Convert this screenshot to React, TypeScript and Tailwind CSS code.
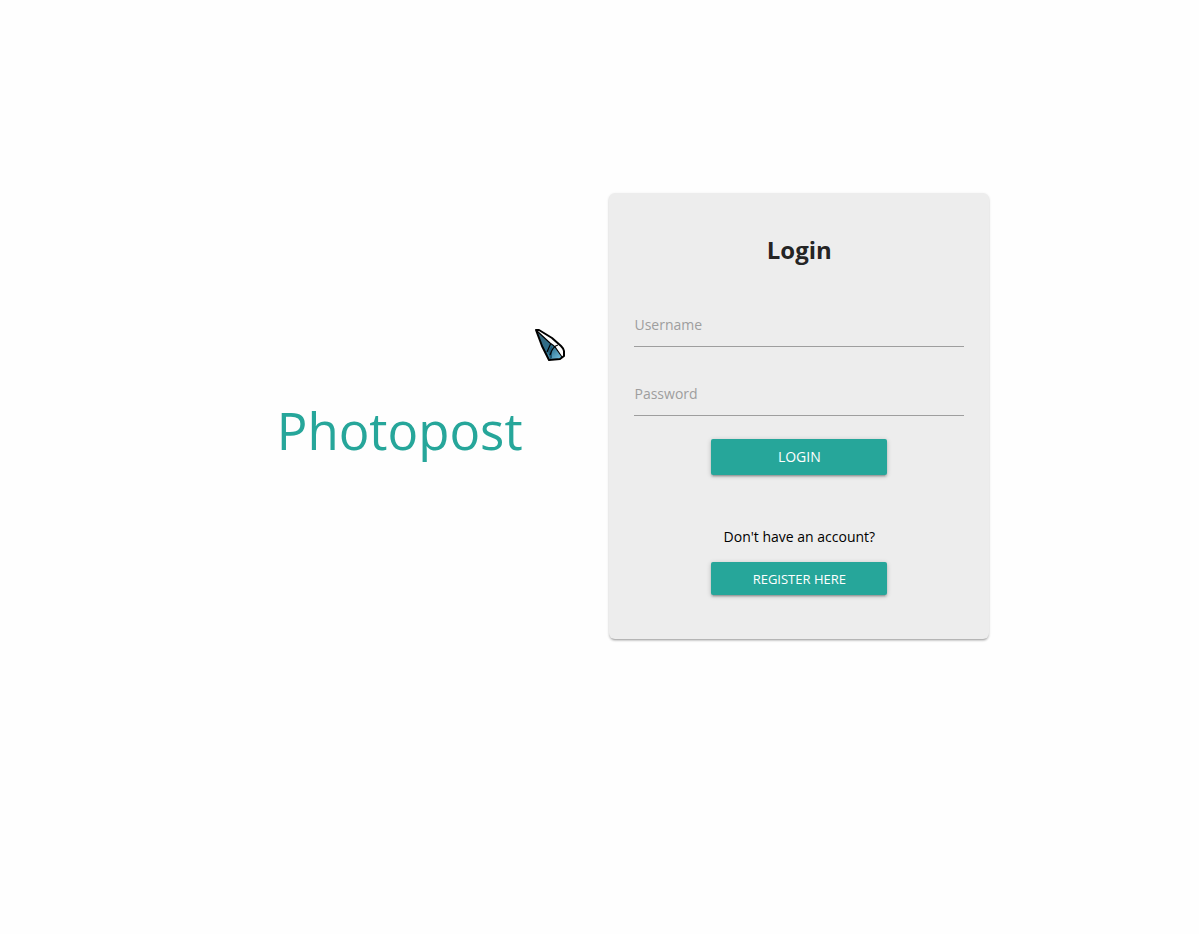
function Pointer() {
  return (
    <svg className="pointer-events-none absolute top-[328px] left-[534px] h-[34px] w-8" viewBox="0 0 32 34" aria-hidden="true">
      <defs>
        <linearGradient id="blade" gradientUnits="userSpaceOnUse" x1="6" y1="10" x2="23" y2="31">
          <stop offset="0" stopColor="#35697f" />
          <stop offset="0.55" stopColor="#2c6e8c" />
          <stop offset="1" stopColor="#6ab4d2" />
        </linearGradient>
      </defs>
      <path d="M2 2L5 2L18 10L30 22L30 29L26 31L15 32L8 18Z" fill="#fff" />
      <path d="M2 2L16 15L21 19L28 30L15 32L8 18Z" fill="url(#blade)" />
      <path d="M14 23L18 18L18 30L16 31Z" fill="#1f5874" />
      <path d="M3 3L16 15Q19 17 21 19L28 29M17 15L13 24M24 17Q19 18 16 27" fill="none" stroke="#000" strokeWidth="1.200" />
      <path d="M2 2L5 2L18 10L27 18Q30 21 30 23L30 28L26 31L15 32L8 18Z" fill="none" stroke="#000" strokeWidth="2" strokeLinejoin="round" />
    </svg>
  );
}

const buttonClass =
  "w-44 rounded-[2px] bg-[#26a69a] text-center text-white uppercase shadow-[0_2px_2px_0_rgba(0,0,0,0.14),0_3px_1px_-2px_rgba(0,0,0,0.12),0_1px_5px_0_rgba(0,0,0,0.2)]";
const inputClass =
  "h-[46px] w-full border-b border-[#9e9e9e] bg-transparent pt-px text-sm text-black/87 outline-none placeholder:text-[#9e9e9e] focus:border-[#26a69a]";

export default function App() {
  return (
    <main className="relative min-h-screen bg-[#fefefe] font-['Open_Sans',sans-serif] text-black/87">
      <div className="mx-auto grid w-2/3 grid-cols-2 items-center pt-[193px]">
        <h1 className="pt-7 text-center text-[51px] leading-[64px] font-normal text-[#26a69a]">Photopost</h1>
        <section className="mx-[10px] flex flex-col items-center rounded-md bg-[#ededed] px-[25px] pt-10 pb-11 shadow-[0_2px_2px_0_rgba(0,0,0,0.14),0_3px_1px_-2px_rgba(0,0,0,0.12),0_1px_3px_0_rgba(0,0,0,0.12)]">
          <h2 className="text-2xl leading-[34px] font-bold">Login</h2>
          <form className="mt-[34px] flex w-full flex-col items-center gap-[23px]" onSubmit={(e) => e.preventDefault()}>
            <input className={inputClass} type="text" placeholder="Username" aria-label="Username" autoComplete="username" />
            <input className={inputClass} type="password" placeholder="Password" aria-label="Password" autoComplete="current-password" />
            <button type="submit" className={`${buttonClass} h-9 text-sm`}>Login</button>
          </form>
          <p className="mt-[50px] text-sm leading-6 text-black">Don't have an account?</p>
          <a href="#register" className={`${buttonClass} mt-[13px] h-[33px] text-[13px] leading-[34px]`}>Register here</a>
        </section>
      </div>
      <Pointer />
    </main>
  );
}
